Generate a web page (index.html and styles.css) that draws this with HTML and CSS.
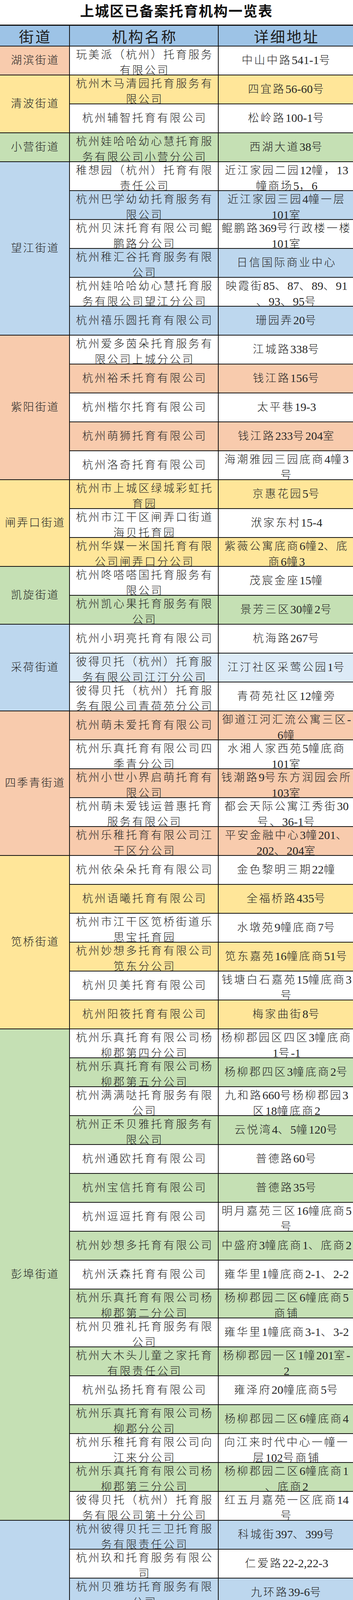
FILE: index.html
```html
<!DOCTYPE html>
<html lang="zh-CN">
<head>
<meta charset="utf-8">
<title>上城区已备案托育机构一览表</title>
<link rel="stylesheet" href="styles.css">
</head>
<body>
<h1 class="title">上城区已备案托育机构一览表</h1>
<div class="grid">
  <div class="h">街道</div>
  <div class="h hl">机构名称</div>
  <div class="h hl">详细地址</div>

  <div class="c st o r1"><span>湖滨街道</span></div>
  <div class="c n w two"><span>玩美派（杭州）托育服务<br>有限公司</span></div>
  <div class="c a w"><span>中山中路<span class="d">541-1</span>号</span></div>

  <div class="c st y r2"><span>清波街道</span></div>
  <div class="c n y two"><span>杭州木马清园托育服务有<br>限公司</span></div>
  <div class="c a y"><span>四宜路<span class="d">56-60</span>号</span></div>
  <div class="c n w"><span>杭州辅智托育有限公司</span></div>
  <div class="c a w"><span>松岭路<span class="d">100-1</span>号</span></div>

  <div class="c st g r1"><span>小营街道</span></div>
  <div class="c n g two"><span>杭州娃哈哈幼心慧托育服<br>务有限公司小营分公司</span></div>
  <div class="c a g"><span>西湖大道<span class="d">38</span>号</span></div>

  <div class="c st b r6"><span>望江街道</span></div>
  <div class="c n w two"><span>稚想园（杭州）托育有限<br>责任公司</span></div>
  <div class="c a w two"><span>近江家园二园<span class="d">12</span>幢，<span class="d">13</span><br>幢商场<span class="d">5</span>，<span class="d">6</span></span></div>
  <div class="c n b two"><span>杭州巴学幼幼托育服务有<br>限公司</span></div>
  <div class="c a b two"><span>近江家园三园<span class="d">4</span>幢一层<br><span class="d">101</span>室</span></div>
  <div class="c n w two"><span>杭州贝沫托育有限公司鲲<br>鹏路分公司</span></div>
  <div class="c a w two"><span>鲲鹏路<span class="d">369</span>号行政楼一楼<br><span class="d">101</span>室</span></div>
  <div class="c n b two"><span>杭州稚汇谷托育服务有限<br>公司</span></div>
  <div class="c a b"><span>日信国际商业中心</span></div>
  <div class="c n w two"><span>杭州娃哈哈幼心慧托育服<br>务有限公司望江分公司</span></div>
  <div class="c a w two"><span>映霞街<span class="d">85</span>、<span class="d">87</span>、<span class="d">89</span>、<span class="d">91</span><br>、<span class="d">93</span>、<span class="d">95</span>号</span></div>
  <div class="c n b"><span>杭州禧乐圆托育有限公司</span></div>
  <div class="c a b"><span>珊园弄<span class="d">20</span>号</span></div>

  <div class="c st o r5"><span>紫阳街道</span></div>
  <div class="c n w two"><span>杭州爱多茵朵托育服务有<br>限公司上城分公司</span></div>
  <div class="c a w"><span>江城路<span class="d">338</span>号</span></div>
  <div class="c n o"><span>杭州裕禾托育有限公司</span></div>
  <div class="c a o"><span>钱江路<span class="d">156</span>号</span></div>
  <div class="c n w"><span>杭州楷尔托育有限公司</span></div>
  <div class="c a w"><span>太平巷<span class="d">19-3</span></span></div>
  <div class="c n o"><span>杭州萌狮托育有限公司</span></div>
  <div class="c a o"><span>钱江路<span class="d">233</span>号<span class="d">204</span>室</span></div>
  <div class="c n w"><span>杭州洛奇托育有限公司</span></div>
  <div class="c a w two"><span>海潮雅园三园底商<span class="d">4</span>幢<span class="d">3</span><br>号</span></div>

  <div class="c st y r3"><span>闸弄口街道</span></div>
  <div class="c n y two"><span>杭州市上城区绿城彩虹托<br>育园</span></div>
  <div class="c a y"><span>京惠花园<span class="d">5</span>号</span></div>
  <div class="c n w two"><span>杭州市江干区闸弄口街道<br>海贝托育园</span></div>
  <div class="c a w"><span>洑家东村<span class="d">15-4</span></span></div>
  <div class="c n y two"><span>杭州华媒一米国托育有限<br>公司闸弄口分公司</span></div>
  <div class="c a y two"><span>紫薇公寓底商<span class="d">6</span>幢<span class="d">2</span>、底<br>商<span class="d">6</span>幢<span class="d">3</span></span></div>

  <div class="c st g r2"><span>凯旋街道</span></div>
  <div class="c n w two"><span>杭州咚嗒嗒国托育服务有<br>限公司</span></div>
  <div class="c a w"><span>茂宸金座<span class="d">15</span>幢</span></div>
  <div class="c n g two"><span>杭州凯心果托育服务有限<br>公司</span></div>
  <div class="c a g"><span>景芳三区<span class="d">30</span>幢<span class="d">2</span>号</span></div>

  <div class="c st b r3"><span>采荷街道</span></div>
  <div class="c n w"><span>杭州小玥亮托育有限公司</span></div>
  <div class="c a w"><span>杭海路<span class="d">267</span>号</span></div>
  <div class="c n lb two"><span>彼得贝托（杭州）托育服<br>务有限公司江汀分公司</span></div>
  <div class="c a lb"><span>江汀社区采莺公园<span class="d">1</span>号</span></div>
  <div class="c n w two"><span>彼得贝托（杭州）托育服<br>务有限公司青荷苑分公司</span></div>
  <div class="c a w"><span>青荷苑社区<span class="d">12</span>幢旁</span></div>

  <div class="c st o r5"><span>四季青街道</span></div>
  <div class="c n o"><span>杭州萌未爱托育有限公司</span></div>
  <div class="c a o two"><span>御道江河汇流公寓三区<span class="d">-</span><br><span class="d">6</span>幢</span></div>
  <div class="c n w two"><span>杭州乐真托育有限公司四<br>季青分公司</span></div>
  <div class="c a w two"><span>水湘人家西苑<span class="d">5</span>幢底商<br><span class="d">101</span>室</span></div>
  <div class="c n o two"><span>杭州小世小界启萌托育有<br>限公司</span></div>
  <div class="c a o two"><span>钱潮路<span class="d">9</span>号东方润园会所<br><span class="d">103</span>室</span></div>
  <div class="c n w two"><span>杭州萌未爱钱运普惠托育<br>服务有限公司</span></div>
  <div class="c a w two"><span>都会天际公寓江秀街<span class="d">30</span><br>号、<span class="d">36-1</span>号</span></div>
  <div class="c n o two"><span>杭州乐稚托育有限公司江<br>干区分公司</span></div>
  <div class="c a o two"><span>平安金融中心<span class="d">3</span>幢<span class="d">201</span>、<br><span class="d">202</span>、<span class="d">204</span>室</span></div>

  <div class="c st y r6"><span>笕桥街道</span></div>
  <div class="c n w"><span>杭州依朵朵托育有限公司</span></div>
  <div class="c a w"><span>金色黎明三期<span class="d">22</span>幢</span></div>
  <div class="c n y"><span>杭州语曦托育有限公司</span></div>
  <div class="c a y"><span>全福桥路<span class="d">435</span>号</span></div>
  <div class="c n w two"><span>杭州市江干区笕桥街道乐<br>思宝托育园</span></div>
  <div class="c a w"><span>水墩苑<span class="d">9</span>幢底商<span class="d">7</span>号</span></div>
  <div class="c n y two"><span>杭州妙想多托育有限公司<br>笕东分公司</span></div>
  <div class="c a y"><span>笕东嘉苑<span class="d">16</span>幢底商<span class="d">51</span>号</span></div>
  <div class="c n w"><span>杭州贝美托育有限公司</span></div>
  <div class="c a w two"><span>钱塘白石嘉苑<span class="d">15</span>幢底商<span class="d">3</span><br>号</span></div>
  <div class="c n y"><span>杭州阳筱托育有限公司</span></div>
  <div class="c a y"><span>梅家曲街<span class="d">8</span>号</span></div>

  <div class="c st g r17"><span>彭埠街道</span></div>
  <div class="c n w two"><span>杭州乐真托育有限公司杨<br>柳郡第四分公司</span></div>
  <div class="c a w two"><span>杨柳郡园区四区<span class="d">3</span>幢底商<br><span class="d">1</span>号<span class="d">-1</span></span></div>
  <div class="c n g two"><span>杭州乐真托育有限公司杨<br>柳郡第五分公司</span></div>
  <div class="c a g"><span>杨柳郡四区<span class="d">3</span>幢底商<span class="d">2</span>号</span></div>
  <div class="c n w two"><span>杭州满满哒托育服务有限<br>公司</span></div>
  <div class="c a w two"><span>九和路<span class="d">660</span>号杨柳郡园<span class="d">3</span><br>区<span class="d">18</span>幢底商<span class="d">2</span></span></div>
  <div class="c n g two"><span>杭州正禾贝雅托育服务有<br>限公司</span></div>
  <div class="c a g"><span>云悦湾<span class="d">4</span>、<span class="d">5</span>幢<span class="d">120</span>号</span></div>
  <div class="c n w"><span>杭州通欧托育有限公司</span></div>
  <div class="c a w"><span>普德路<span class="d">60</span>号</span></div>
  <div class="c n g"><span>杭州宝信托育有限公司</span></div>
  <div class="c a g"><span>普德路<span class="d">35</span>号</span></div>
  <div class="c n w"><span>杭州逗逗托育有限公司</span></div>
  <div class="c a w two"><span>明月嘉苑三区<span class="d">16</span>幢底商<span class="d">5</span><br>号</span></div>
  <div class="c n g"><span>杭州妙想多托育有限公司</span></div>
  <div class="c a g"><span>中盛府<span class="d">3</span>幢底商<span class="d">1</span>、底商<span class="d">2</span></span></div>
  <div class="c n w"><span>杭州沃森托育有限公司</span></div>
  <div class="c a w"><span>雍华里<span class="d">1</span>幢底商<span class="d">2-1</span>、<span class="d">2-2</span></span></div>
  <div class="c n g two"><span>杭州乐真托育有限公司杨<br>柳郡第二分公司</span></div>
  <div class="c a g two"><span>杨柳郡园二区<span class="d">6</span>幢底商<span class="d">5</span><br>商铺</span></div>
  <div class="c n w two"><span>杭州贝雅礼托育服务有限<br>公司</span></div>
  <div class="c a w"><span>雍华里<span class="d">1</span>幢底商<span class="d">3-1</span>、<span class="d">3-2</span></span></div>
  <div class="c n g two"><span>杭州大木头儿童之家托育<br>有限责任公司</span></div>
  <div class="c a g two"><span>杨柳郡园一区<span class="d">1</span>幢<span class="d">201</span>室<span class="d">-</span><br><span class="d">2</span></span></div>
  <div class="c n w"><span>杭州弘扬托育有限公司</span></div>
  <div class="c a w"><span>雍泽府<span class="d">20</span>幢底商<span class="d">5</span>号</span></div>
  <div class="c n g two"><span>杭州乐真托育有限公司杨<br>柳郡分公司</span></div>
  <div class="c a g"><span>杨柳郡园二区<span class="d">6</span>幢底商<span class="d">4</span></span></div>
  <div class="c n w two"><span>杭州乐稚托育有限公司向<br>江来分公司</span></div>
  <div class="c a w two"><span>向江来时代中心一幢一<br>层<span class="d">102</span>号商铺</span></div>
  <div class="c n g two"><span>杭州乐真托育有限公司杨<br>柳郡第三分公司</span></div>
  <div class="c a g two"><span>杨柳郡园二区<span class="d">6</span>幢底商<span class="d">1</span><br>、底商<span class="d">2</span></span></div>
  <div class="c n w two"><span>彼得贝托（杭州）托育服<br>务有限公司第十分公司</span></div>
  <div class="c a w two"><span>红五月嘉苑一区底商<span class="d">14</span><br>号</span></div>

  <div class="c st b r9"><span>九堡街道</span></div>
  <div class="c n b two"><span>杭州彼得贝托三卫托育服<br>务有限责任公司</span></div>
  <div class="c a b"><span>科城街<span class="d">397</span>、<span class="d">399</span>号</span></div>
  <div class="c n w two"><span>杭州玖和托育服务有限公<br>司</span></div>
  <div class="c a w"><span>仁爱路<span class="d">22-2,22-3</span></span></div>
  <div class="c n b two"><span>杭州贝雅坊托育服务有限<br>公司</span></div>
  <div class="c a b"><span>九环路<span class="d">39-6</span>号</span></div>
  <div class="c n w two"><span>杭州心阳幼幼鲸鱼托育有<br>限公司</span></div>
  <div class="c a w two"><span>宋都阳光国际花园观澜<br>苑<span class="d">12</span>幢底商<span class="d">6</span>号</span></div>
  <div class="c n b two"><span>杭州艾茵托育服务有限公<br>司</span></div>
  <div class="c a b two"><span>宋都阳光国际花园商铺<br><span class="d">24.26.30</span>号</span></div>
  <div class="c n w two"><span>杭州贝雅颂托育服务有限<br>公司</span></div>
  <div class="c a w two"><span>圣奥领寓<span class="d">2</span>幢底商（临）<br><span class="d">8</span>号</span></div>
  <div class="c n b two"><span>杭州敏思创想托育有限公<br>司</span></div>
  <div class="c a b"><span>九睦路<span class="d">115</span>号</span></div>
  <div class="c n w two"><span>杭州贝雅婴幼儿托育服务<br>有限公司</span></div>
  <div class="c a w"><span>新蚕桑西苑<span class="d">6-</span>底商<span class="d">1</span>号</span></div>
  <div class="c n b two"><span>乐享童年（杭州）托育有<br>限公司</span></div>
  <div class="c a b"><span>金雅苑仁爱路<span class="d">215</span>号</span></div>

  <div class="c st o r11"><span>丁兰街道</span></div>
  <div class="c n w two"><span>福幼托育服务（杭州）有<br>限公司</span></div>
  <div class="c a w"><span>丁群街<span class="d">214</span>号</span></div>
  <div class="c n o two"><span>杭州稚趣星托育服务有限<br>公司</span></div>
  <div class="c a o"><span>华鹤街<span class="d">938</span>号，<span class="d">936</span>号<span class="d">-1</span></span></div>
  <div class="c n w"><span>杭州安宇托育有限公司</span></div>
  <div class="c a w"><span>长睦路<span class="d">484</span>号</span></div>
  <div class="c n o two"><span>杭州艺趣园托育服务有限<br>公司</span></div>
  <div class="c a o"><span>应家塘巷<span class="d">6</span>号</span></div>
  <div class="c n w"><span>杭州贝亲托育有限公司</span></div>
  <div class="c a w"><span>华鹤街<span class="d">850</span>号</span></div>
  <div class="c n o two"><span>杭州娃哈哈幼心慧托育服<br>务有限公司丁桥分公司</span></div>
  <div class="c a o"><span>环丁路<span class="d">1630</span>号<span class="d">7</span>幢<span class="d">1</span>楼</span></div>
  <div class="c n w"><span>杭州迪迪托育有限公司</span></div>
  <div class="c a w"><span>东兰轩小区<span class="d">6</span>幢一层</span></div>
  <div class="c n o two"><span>宝育（杭州）托育有限公<br>司</span></div>
  <div class="c a o"><span>丁群街<span class="d">206</span>号</span></div>
  <div class="c n w two"><span>蹦哒哒托育（杭州）有限<br>公司</span></div>
  <div class="c a w"><span>环丁路<span class="d">1428</span>号<span class="d">1</span>幢</span></div>
  <div class="c n o"><span>杭州初礼托育有限公司</span></div>
  <div class="c a o"><span>上东名筑<span class="d">3</span>幢底商<span class="d">7.8</span>号</span></div>
  <div class="c n w two"><span>杭州智美托育服务有限公<br>司</span></div>
  <div class="c a w"><span>蕙北支路<span class="d">61</span>号、<span class="d">63</span>号</span></div>
</div>
<p class="note">备注：统计时间截至<span class="d">2025</span>年<span class="d">4</span>月底</p>
</body>
</html>
```
FILE: styles.css
```css
* {
  box-sizing: border-box;
}

html, body {
  margin: 0;
  padding: 0;
  background: #ffffff;
}

body {
  width: 904px;
  font-family: "Liberation Serif", "Noto Sans CJK SC", serif;
  color: #262626;
}

.title {
  margin: 0;
  height: 63px;
  line-height: 52px;
  text-align: center;
  font-family: "Noto Sans CJK SC", sans-serif;
  font-weight: 700;
  font-size: 36px;
  letter-spacing: 2px;
  color: #111111;
}

.grid {
  display: grid;
  grid-template-columns: 177px 381px 346px;
  grid-template-rows: 54px;
  grid-auto-rows: 74px;
  border-bottom: 2px solid #111111;
}

.h {
  border-top: 3px solid #111111;
  background: #9dc3e6;
  display: flex;
  align-items: center;
  justify-content: center;
  font-family: "Noto Sans CJK SC", sans-serif;
  font-size: 38px;
  letter-spacing: 4px;
  padding-left: 4px;
  color: #1e1e1e;
}

.hl {
  border-left: 2px solid #111111;
}

.c {
  border-top: 2px solid #111111;
  display: flex;
  align-items: center;
  justify-content: center;
  overflow: hidden;
  white-space: nowrap;
  text-align: center;
  font-size: 28px;
  font-weight: 300;
  line-height: 40px;
  letter-spacing: 4px;
  padding-left: 4px;
}

.c.two {
  align-items: flex-start;
  padding-top: 2px;
}

.st {
  grid-column: 1;
  letter-spacing: 3px;
  padding-left: 3px;
}

.n {
  grid-column: 2;
  border-left: 2px solid #111111;
}

.a {
  grid-column: 3;
  border-left: 2px solid #111111;
}

.d {
  font-family: "Liberation Serif", serif;
  font-size: 30px;
  font-weight: 400;
  line-height: 1;
  letter-spacing: 0;
}

.r1 { grid-row: span 1; }
.r2 { grid-row: span 2; }
.r3 { grid-row: span 3; }
.r5 { grid-row: span 5; }
.r6 { grid-row: span 6; }
.r9 { grid-row: span 9; }
.r11 { grid-row: span 11; }
.r17 { grid-row: span 17; }

.w { background: #ffffff; }
.o { background: #f8cbad; }
.y { background: #ffe699; }
.g { background: #c5e0b4; }
.b { background: #bdd7ee; }
.lb { background: #ddebf7; }

.note {
  margin: 20px 0 0 0;
  height: 40px;
  font-size: 28px;
  font-weight: 300;
  line-height: 40px;
  letter-spacing: 3px;
  color: #262626;
}
```
